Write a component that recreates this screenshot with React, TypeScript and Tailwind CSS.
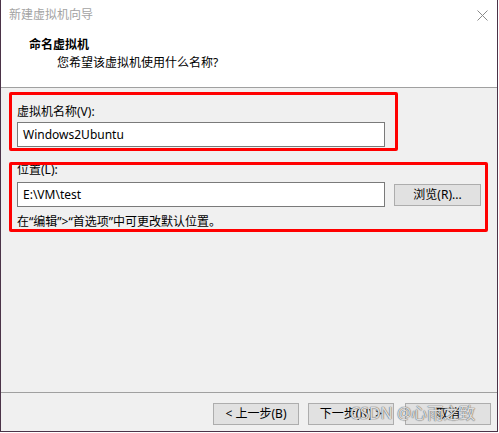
const FONT = "font-['Noto_Sans','Noto_Sans_CJK_SC',sans-serif]";

const WinButton = ({ label, className = "" }: { label: string; className?: string }) => (
  <button
    type="button"
    className={`flex h-[22px] w-[86px] items-center justify-center border border-[#adadad] bg-[#e1e1e1] text-[12px] leading-[16px] text-black ${className}`}
  >
    {label}
  </button>
);

const TextBox = ({ value }: { value: string }) => (
  <div className="flex h-[25px] w-[368px] items-center border border-[#7a7a7a] bg-white px-[5px] text-[12px] leading-[16px] text-black">
    {value}
  </div>
);

export default function App() {
  return (
    <div className={`relative h-[433px] w-[499px] bg-white ${FONT}`}>
      <div className="flex h-[432px] w-[498px] flex-col border-x border-b border-[#4b3348]">
        {/* header */}
        <div className="flex h-[88px] flex-col border-b border-[#a0a0a0] bg-white">
          <div className="flex h-[30px] items-center justify-between pl-[8px] pr-[9px]">
            <span className="text-[12px] leading-[16px] text-[#a3a3a3]">新建虚拟机向导</span>
            <svg width="11" height="11" viewBox="0 0 11 11" aria-hidden="true">
              <path d="M0.5 0.5L10.5 10.5M10.5 0.5L0.5 10.5" stroke="#8a8a8a" strokeWidth="1" />
            </svg>
          </div>
          <div className="mt-[7px] pl-[28px] text-[12px] font-bold leading-[16px] text-black">命名虚拟机</div>
          <div className="mt-[2px] pl-[56px] text-[12px] leading-[16px] text-black">您希望该虚拟机使用什么名称?</div>
        </div>

        {/* body */}
        <div className="flex flex-1 flex-col bg-[#f0f0f0]">
          <div className="flex flex-col pl-[16px] pt-[16px]">
            <div className="text-[12px] leading-[16px] text-black">虚拟机名称(V):</div>
            <div className="mt-[2px]">
              <TextBox value="Windows2Ubuntu" />
            </div>
            <div className="mt-[15px] text-[12px] leading-[16px] text-black">位置(L):</div>
            <div className="mt-[4px] flex items-center gap-[9px]">
              <TextBox value="E:\VM\test" />
              <WinButton label="浏览(R)..." className="w-[87px]" />
            </div>
            <div className="mt-[7px] text-[12px] leading-[16px] text-black">在“编辑”&gt;“首选项”中可更改默认位置。</div>
          </div>
          <div className="flex-1" />
          <div className="flex h-[39px] justify-end gap-[9px] border-t border-[#a0a0a0] pr-[6px] pt-[10px]">
            <WinButton label="< 上一步(B)" />
            <WinButton label="下一步(N) >" className="w-[85px]" />
            <WinButton label="取消" className="ml-[2px] w-[85px]" />
          </div>
        </div>
      </div>

      {/* annotation boxes */}
      <div className="pointer-events-none absolute left-[9px] top-[92px] h-[59px] w-[389px] rounded-[2px] border-[3px] border-[#ff0000]" />
      <div className="pointer-events-none absolute left-[9px] top-[162px] h-[70px] w-[479px] rounded-[2px] border-[3px] border-[#ff0000]" />

      {/* watermark */}
      <div className="pointer-events-none absolute left-[350px] top-[403px] text-[16px] leading-[20px] text-white/80 [text-shadow:0_0_1px_#555,0_0_1px_#555]">
        CSDN @心雨之致
      </div>
    </div>
  );
}
